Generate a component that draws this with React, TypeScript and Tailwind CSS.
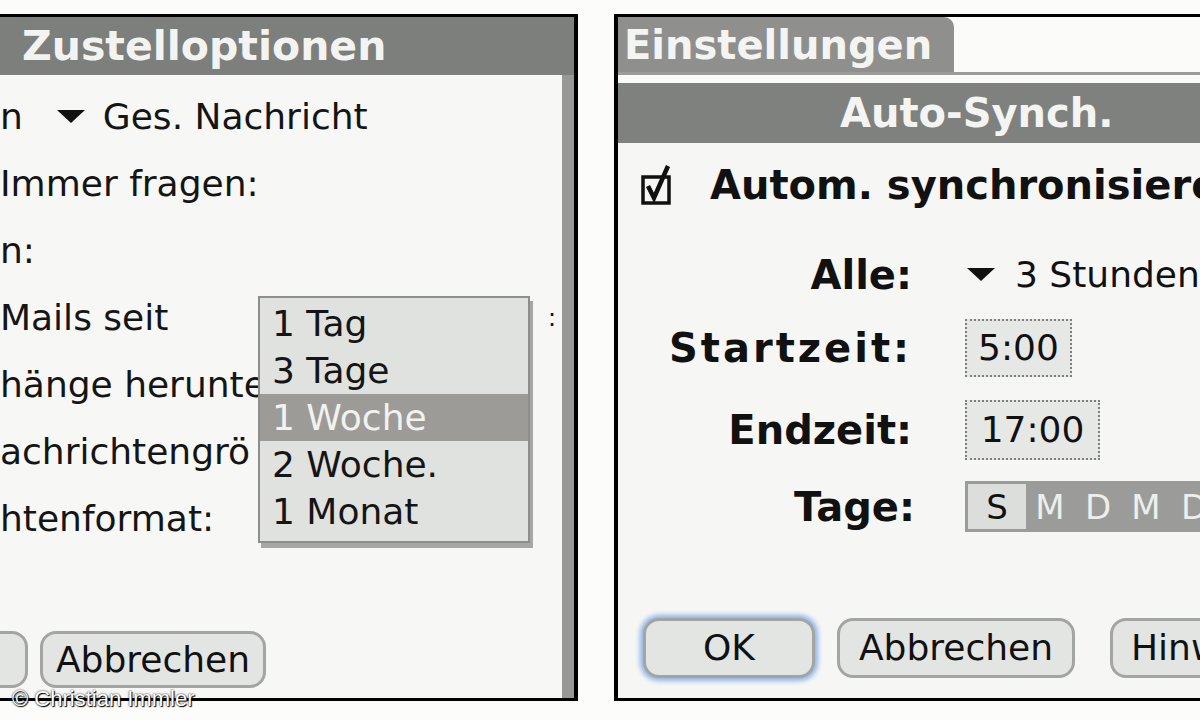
import React from "react";

const regular = "font-['DejaVu_Sans',sans-serif]";
const bold = "font-['DejaVu_Sans',sans-serif] font-bold";

function Triangle() {
  return (
    <svg width="28" height="14" viewBox="0 0 28 14" className="shrink-0">
      <polygon points="0,0 28,0 14,13" fill="#111" />
    </svg>
  );
}

function Checkbox() {
  return (
    <svg width="32" height="42" viewBox="0 0 32 42" className="shrink-0">
      <rect x="2" y="13" width="26" height="26" fill="none" stroke="#111" strokeWidth="3.5" />
      <path d="M7 22 L13 34 L27 2" fill="none" stroke="#111" strokeWidth="4.5" />
    </svg>
  );
}

function PalmButton({ label, className }: { label: string; className?: string }) {
  return (
    <div
      className={`flex shrink-0 items-center justify-center rounded-[16px] border-[3px] border-[#a3a5a2] bg-[#e3e5e2] text-[36px] text-[#111] ${regular} ${className ?? ""}`}
    >
      {label}
    </div>
  );
}

// linkes Fenster: Zustelloptionen mit offenem Auswahlmenue
function DeliveryPanel() {
  const rows = ["n", "Immer fragen:", "n:", "Mails seit", "hänge herunte", "achrichtengrö", "htenformat:"];
  const options = ["1 Tag", "3 Tage", "1 Woche", "2 Woche.", "1 Monat"];

  return (
    <div className="relative flex h-[687px] w-[578px] shrink-0 flex-col overflow-hidden border-y-[3px] border-r-[4px] border-black bg-[#f7f8f5]">
      <div className={`flex h-[58px] shrink-0 items-center bg-[#7c7f7b] pl-[22px] text-[41px] leading-none text-[#f3f4f2] ${bold}`}>
        Zustelloptionen
      </div>
      <div className="flex flex-1">
        <div className={`flex min-w-0 flex-1 flex-col pt-[8px] text-[36px] leading-none text-[#151515] ${regular}`}>
          {rows.map((r, i) => (
            <div key={i} className="flex h-[67px] items-center">
              <span className="whitespace-nowrap">{r}</span>
              {i === 0 && (
                <div className="ml-[34px] flex items-center gap-[18px]">
                  <Triangle />
                  <span className="whitespace-nowrap">Ges. Nachricht</span>
                </div>
              )}
              {i === 3 && <span className="ml-auto mr-[6px] text-[24px]">:</span>}
            </div>
          ))}
          <div className="mt-[79px] flex h-[57px] items-stretch gap-[12px]">
            <PalmButton label="OK" className="-ml-[120px] w-[148px]" />
            <PalmButton label="Abbrechen" className="w-[226px]" />
          </div>
        </div>
        <div className="w-[12px] shrink-0 bg-[#989996]" />
      </div>

      {/* Auswahlliste */}
      <div className="absolute left-[258px] top-[279px] flex w-[272px] flex-col border-[2px] border-[#8e8f8c] bg-[#dfe2df] pt-[2px] pb-[6px] shadow-[3px_5px_0_#a7a8a5]">
        {options.map((o) => (
          <div
            key={o}
            className={`flex h-[47px] items-center pl-[12px] text-[36px] leading-none ${regular} ${
              o === "1 Woche" ? "bg-[#9c9b98] text-[#f2f2f0]" : "text-[#151515]"
            }`}
          >
            {o}
          </div>
        ))}
      </div>
    </div>
  );
}

// rechtes Fenster: Auto-Synch.
function SyncPanel() {
  const days = ["M", "D", "M", "D"];

  return (
    <div className="ml-[36px] flex h-[687px] min-w-0 flex-1 flex-col overflow-hidden border-y-[3px] border-l-[4px] border-black bg-[#f6f7f4]">
      <div className="flex h-[55px] shrink-0 bg-[#fbfbfa]">
        <div className={`flex w-[336px] items-center rounded-tr-[10px] bg-[#8f908d] pl-[6px] text-[40px] leading-none text-[#f4f4f2] ${bold}`}>
          Einstellungen
        </div>
      </div>
      <div className="h-[3px] shrink-0 bg-[#9d9e9b]" />
      <div className="h-[8px] shrink-0 bg-[#fbfbfa]" />
      <div className={`flex h-[60px] shrink-0 items-center bg-[#7e817d] pl-[222px] text-[40px] leading-none text-[#f4f4f2] ${bold}`}>
        Auto-Synch.
      </div>

      <div className="flex flex-col text-[#111]">
        <div className="mt-[14px] flex h-[56px] items-center pl-[23px]">
          <Checkbox />
          <span className={`ml-[37px] whitespace-nowrap text-[40px] leading-none ${bold}`}>Autom. synchronisieren</span>
        </div>

        <div className="mt-[34px] flex h-[55px] items-center">
          <span className={`w-[294px] shrink-0 text-right text-[40px] leading-none ${bold}`}>Alle:</span>
          <div className="ml-[55px] flex shrink-0 items-center gap-[20px]">
            <Triangle />
            <span className={`whitespace-nowrap text-[36px] leading-none ${regular}`}>3 Stunden</span>
          </div>
        </div>

        <div className="mt-[17px] flex h-[58px] items-center">
          <span className={`w-[294px] shrink-0 text-right text-[40px] leading-none tracking-[3px] ${bold}`}>Startzeit:</span>
          <div className={`ml-[53px] flex h-full w-[107px] shrink-0 items-center justify-center border-[2px] border-dotted border-[#7d7f7c] bg-[#e6e8e5] text-[36px] leading-none ${regular}`}>
            5:00
          </div>
        </div>

        <div className="mt-[23px] flex h-[60px] items-center">
          <span className={`w-[294px] shrink-0 text-right text-[40px] leading-none ${bold}`}>Endzeit:</span>
          <div className={`ml-[53px] flex h-full w-[135px] shrink-0 items-center justify-center border-[2px] border-dotted border-[#7d7f7c] bg-[#e6e8e5] text-[36px] leading-none ${regular}`}>
            17:00
          </div>
        </div>

        <div className="mt-[21px] flex h-[51px] items-center">
          <span className={`w-[297px] shrink-0 text-right text-[40px] leading-none ${bold}`}>Tage:</span>
          <div className={`ml-[50px] flex h-full min-w-0 flex-1 items-stretch overflow-hidden bg-[#9b9c99] py-[3px] pl-[3px] text-[34px] leading-none ${regular}`}>
            <span className="flex w-[58px] shrink-0 items-center justify-center bg-[#dcdedb] text-[#111]">S</span>
            {days.map((d, i) => (
              <span key={i} className="flex w-[48px] shrink-0 items-center justify-center text-[#eeeeec]">
                {d}
              </span>
            ))}
          </div>
        </div>

        <div className="mt-[86px] flex h-[60px] items-stretch pl-[25px]">
          <PalmButton
            label="OK"
            className="w-[172px] border-[#2a52b0] shadow-[0_0_5px_3px_#8fb2ea]"
          />
          <PalmButton label="Abbrechen" className="ml-[22px] w-[238px]" />
          <PalmButton label="Hinweise" className="ml-[35px] w-[200px] justify-start pl-[18px]" />
        </div>
      </div>
    </div>
  );
}

export default function App() {
  return (
    <div className="relative flex h-[720px] w-[1200px] items-start overflow-hidden bg-[#fcfcfa] pt-[14px]">
      <DeliveryPanel />
      <SyncPanel />
      <div className="absolute left-[12px] top-[688px] font-['Liberation_Sans',sans-serif] text-[22px] leading-none text-white [text-shadow:0_0_2px_#000,1px_1px_1px_#000]">
        © Christian Immler
      </div>
    </div>
  );
}
